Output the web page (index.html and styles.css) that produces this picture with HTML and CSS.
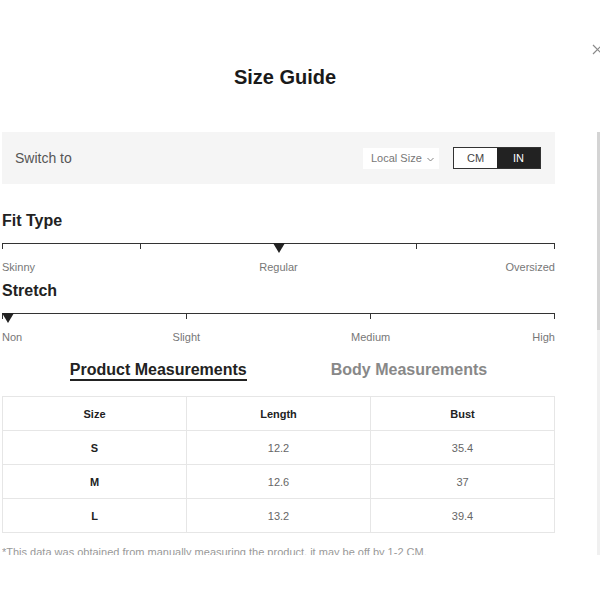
FILE: index.html
```html
<!DOCTYPE html>
<html lang="en">
<head>
    <meta charset="UTF-8">
    <meta name="viewport" content="width=device-width, initial-scale=1.0">
    <title>Size Guide</title>
    <link rel="stylesheet" href="styles.css">
</head>
<body>
    <div class="modal">
        <svg class="close" width="11" height="11" viewBox="0 0 11 11">
            <path d="M1 1 L10 10 M10 1 L1 10" stroke="#8a8a8a" stroke-width="1.2" fill="none"/>
        </svg>
        <h2 class="title">Size Guide</h2>

        <div class="modal-body">
            <div class="content">
                <div class="switch-bar">
                    <span class="switch-label">Switch to</span>
                    <div class="switch-controls">
                        <div class="local-size">Local Size
                            <svg width="7" height="5" viewBox="0 0 7 5"><path d="M0.5 1 L3.5 4 L6.5 1" stroke="#777" stroke-width="0.9" fill="none"/></svg>
                        </div>
                        <div class="unit-toggle">
                            <span class="unit">CM</span>
                            <span class="unit active">IN</span>
                        </div>
                    </div>
                </div>

                <div class="scale-block first">
                    <h3>Fit Type</h3>
                    <div class="scale">
                        <div class="track">
                            <span class="seg"></span><span class="seg"></span><span class="seg"></span><span class="seg"></span>
                        </div>
                        <span class="marker marker-mid"></span>
                    </div>
                    <div class="labels fit-labels">
                        <span class="lab-left">Skinny</span>
                        <span class="lab-center">Regular</span>
                        <span class="lab-right">Oversized</span>
                    </div>
                </div>

                <div class="scale-block">
                    <h3>Stretch</h3>
                    <div class="scale">
                        <div class="track">
                            <span class="seg"></span><span class="seg"></span><span class="seg"></span>
                        </div>
                        <span class="marker marker-start"></span>
                    </div>
                    <div class="labels stretch-labels">
                        <span class="lab-left">Non</span>
                        <span class="lab-center">Slight</span>
                        <span class="lab-center">Medium</span>
                        <span class="lab-right">High</span>
                    </div>
                </div>

                <div class="tabs">
                    <span class="tab active">Product Measurements</span>
                    <span class="tab">Body Measurements</span>
                </div>

                <table class="size-table">
                    <tr>
                        <th>Size</th>
                        <th>Length</th>
                        <th>Bust</th>
                    </tr>
                    <tr>
                        <td class="size">S</td>
                        <td>12.2</td>
                        <td>35.4</td>
                    </tr>
                    <tr>
                        <td class="size">M</td>
                        <td>12.6</td>
                        <td>37</td>
                    </tr>
                    <tr>
                        <td class="size">L</td>
                        <td>13.2</td>
                        <td>39.4</td>
                    </tr>
                </table>

                <p class="note">*This data was obtained from manually measuring the product, it may be off by 1-2 CM.</p>
            </div>
            <div class="scrollbar"><div class="thumb"></div></div>
        </div>
    </div>
</body>
</html>
```

FILE: styles.css
```css
body {
    margin: 0;
    padding: 0;
    background-color: #fff;
    font-family: "Liberation Sans", Arial, sans-serif;
    color: #222;
}
.modal {
    position: relative;
    width: 600px;
    height: 600px;
    overflow: hidden;
}
.close {
    position: absolute;
    left: 592px;
    top: 44px;
}
.title {
    margin: 0;
    padding-top: 65px;
    height: 24px;
    line-height: 24px;
    font-size: 20px;
    font-weight: bold;
    text-align: center;
    color: #1a1a1a;
    padding-right: 30px;
    margin-bottom: 43px;
}
.modal-body {
    display: flex;
    justify-content: space-between;
    padding-left: 2px;
    height: 423px;
}
.content {
    width: 553px;
    overflow: hidden;
}
.scrollbar {
    width: 3px;
    background-color: #f0f0f0;
}
.thumb {
    height: 198px;
    background-color: #d4d4d4;
}
.switch-bar {
    display: flex;
    align-items: center;
    justify-content: space-between;
    height: 52px;
    padding: 0 14px 0 13px;
    background-color: #f5f5f5;
}
.switch-label {
    font-size: 14px;
    color: #555;
}
.switch-controls {
    display: flex;
    align-items: center;
    gap: 14px;
}
.local-size {
    display: flex;
    align-items: center;
    gap: 5px;
    height: 21px;
    width: 76px;
    box-sizing: border-box;
    padding-left: 8px;
    background-color: #fff;
    font-size: 11px;
    color: #777;
}
.local-size svg {
    margin-top: 2px;
}
.unit-toggle {
    display: flex;
    border: 1px solid #333;
    height: 20px;
}
.unit {
    width: 43px;
    line-height: 20px;
    text-align: center;
    font-size: 11px;
    color: #444;
    background-color: #fff;
}
.unit.active {
    background-color: #222;
    color: #fff;
}
.scale-block {
    margin-top: 7px;
}
.scale-block.first {
    margin-top: 27px;
}
.scale-block h3 {
    margin: 0 0 12px;
    font-size: 16px;
    line-height: 20px;
    font-weight: bold;
    color: #222;
}
.scale {
    position: relative;
}
.track {
    display: flex;
}
.seg {
    flex: 1;
    height: 5px;
    border-top: 1px solid #333;
    border-right: 1px solid #333;
}
.seg:first-child {
    border-left: 1px solid #333;
}
.marker {
    position: absolute;
    top: 0;
    width: 0;
    height: 0;
    border-left: 6px solid transparent;
    border-right: 6px solid transparent;
    border-top: 10px solid #222;
}
.marker-mid {
    left: 50%;
    transform: translateX(-50%);
}
.marker-start {
    left: 0;
}
.labels {
    display: grid;
    margin-top: 11px;
    font-size: 11px;
    line-height: 14px;
    color: #777;
}
.fit-labels {
    grid-template-columns: 1fr 2fr 1fr;
}
.stretch-labels {
    grid-template-columns: 1fr 2fr 2fr 1fr;
}
.lab-left {
    text-align: left;
}
.lab-center {
    text-align: center;
}
.lab-right {
    text-align: right;
}
.tabs {
    display: flex;
    justify-content: center;
    gap: 84px;
    margin-top: 16px;
}
.tab {
    font-size: 16px;
    font-weight: bold;
    line-height: 19px;
    color: #888;
    border-bottom: 2px solid transparent;
}
.tab.active {
    color: #222;
    border-bottom-color: #222;
}
.size-table {
    width: 100%;
    margin-top: 15px;
    border-collapse: collapse;
    table-layout: fixed;
}
.size-table th,
.size-table td {
    height: 33px;
    padding: 0;
    border: 1px solid #e6e6e6;
    text-align: center;
    font-size: 11px;
    color: #666;
}
.size-table th,
.size-table td.size {
    font-weight: bold;
    color: #222;
}
.note {
    margin: 12px 0 0;
    font-size: 11px;
    line-height: 14px;
    color: #999;
}
```
